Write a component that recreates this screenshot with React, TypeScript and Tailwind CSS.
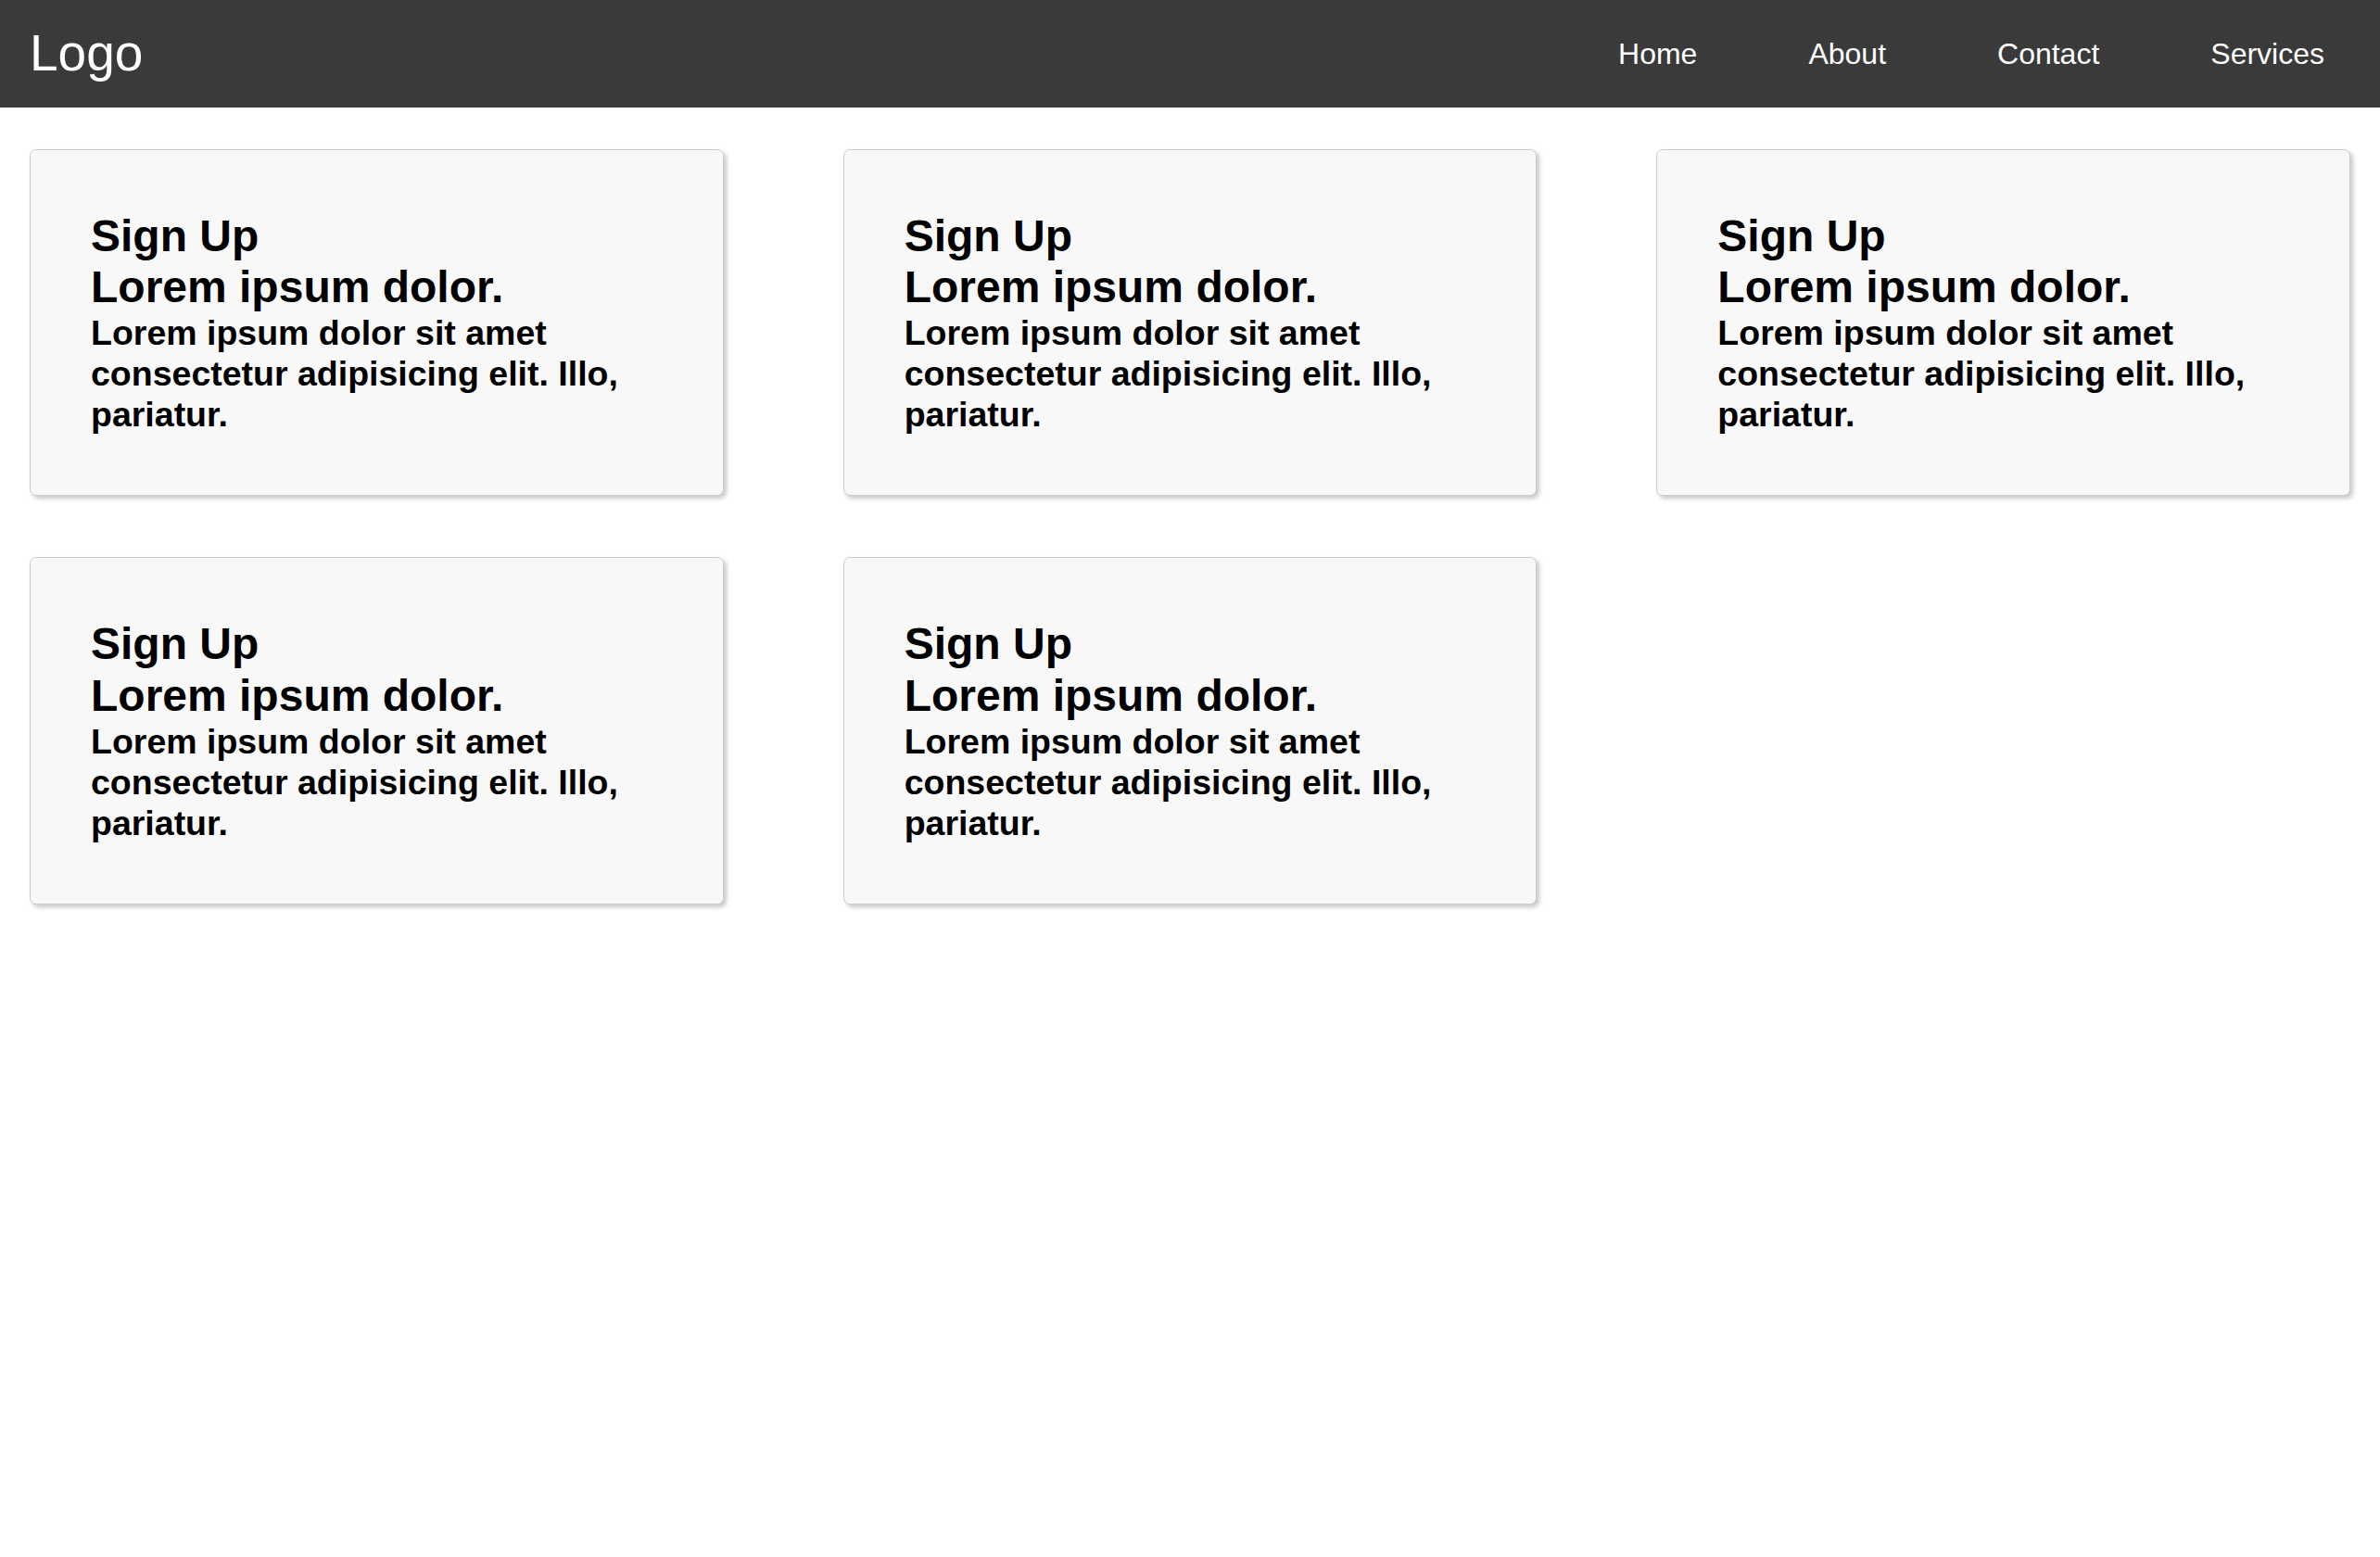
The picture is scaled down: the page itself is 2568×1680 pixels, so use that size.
import React from "react";

const cards = [0, 1, 2, 3, 4];

export default function App() {
  return (
    <div className="min-h-screen bg-white text-black" style={{ fontFamily: '"Liberation Sans", Arial, sans-serif' }}>
      <header className="h-[116px] bg-[#3a3a3a] flex items-center justify-between pl-[32px] pr-[60px]">
        <div className="text-white text-[55px] leading-[1.15]">Logo</div>
        <nav className="flex items-center gap-[120px] text-white text-[32px] leading-[1.15]">
          <a>Home</a>
          <a>About</a>
          <a>Contact</a>
          <a>Services</a>
        </nav>
      </header>
      <main className="grid grid-cols-3 gap-x-[129px] gap-y-[66px] px-[32px] pt-[45px]">
        {cards.map((i) => (
          <div
            key={i}
            className="bg-[#f8f8f8] border border-[#cccccc] rounded-[7px] shadow-[3px_3px_5px_rgba(0,0,0,0.22)] p-[65px] font-bold"
          >
            <h2 className="text-[48px] leading-[55.2px]">Sign Up</h2>
            <h3 className="text-[48px] leading-[55.2px]">Lorem ipsum dolor.</h3>
            <p className="text-[37.5px] leading-[44px]">
              Lorem ipsum dolor sit amet consectetur adipisicing elit. Illo, pariatur.
            </p>
          </div>
        ))}
      </main>
    </div>
  );
}
